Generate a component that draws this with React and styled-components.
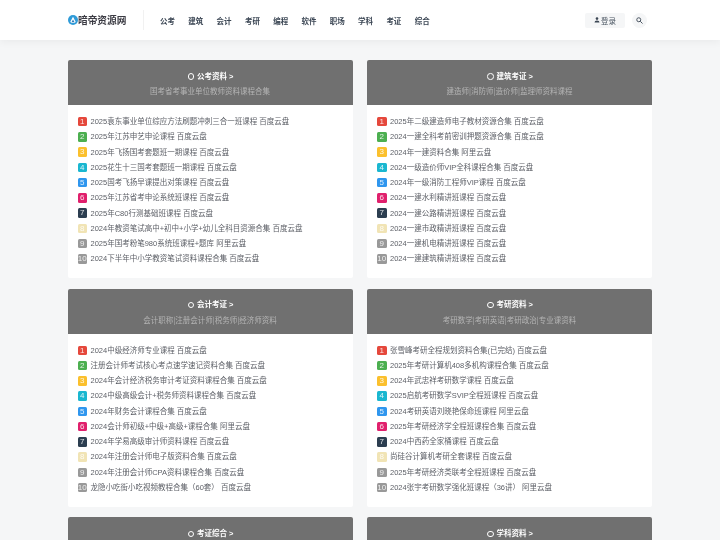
import React from "react";
import styled, { createGlobalStyle } from "styled-components";

const Global = createGlobalStyle`
  html, body { margin: 0; padding: 0; height: 540px; overflow: hidden; background: #f5f6f7; }
  body { font-family: "Liberation Sans", "Noto Sans CJK SC", sans-serif; }
`;

const Page = styled.div`
  filter: blur(0.35px);
`;
const Header = styled.header`
  height: 40px;
  background: #fff;
  box-shadow: 0 2px 8px rgba(0, 0, 0, 0.05);
  display: flex;
  align-items: center;
  padding: 0 73px 0 67.5px;
  position: relative;
`;
const Logo = styled.div`
  display: flex;
  align-items: center;
  gap: 0.5px;
  width: 75.5px;
  height: 20px;
  border-right: 1px solid #f1f1f1;
  font: 700 9.7px "Noto Sans CJK SC", serif;
  color: #3c3c44;
`;
const Nav = styled.nav`
  display: flex;
  gap: 13.3px;
  margin-left: 16px;
  flex: 1;
`;
const NavItem = styled.a`
  font: 700 7.5px "Noto Sans CJK SC", sans-serif;
  color: #3b4654;
`;
const Login = styled.button`
  width: 40px;
  height: 15px;
  margin-right: -1px;
  border: 0;
  padding: 0;
  border-radius: 2px;
  background: #f5f6f7;
  color: #4a5561;
  font: 400 7.5px "Noto Sans CJK SC", sans-serif;
  display: flex;
  align-items: center;
  justify-content: center;
  gap: 1px;
`;
const SearchBtn = styled.button`
  width: 15px;
  height: 15px;
  margin-left: 8px;
  border: 0;
  padding: 0;
  border-radius: 50%;
  background: #f5f6f7;
  display: flex;
  align-items: center;
  justify-content: center;
`;
const Main = styled.main`
  width: 585px;
  margin: 20px 0 0 67.5px;
  display: grid;
  grid-template-columns: 285px 285px;
  column-gap: 14.5px;
  row-gap: 10.5px;
`;
const Card = styled.section`
  background: #fff;
  border-radius: 2px;
`;
const CardHead = styled.div`
  height: 45px;
  box-sizing: border-box;
  padding-top: 10.5px;
  background: #707070;
  border-radius: 2px 2px 0 0;
  text-align: center;
`;
const CardTitle = styled.div`
  display: flex;
  align-items: center;
  justify-content: center;
  gap: 3px;
  height: 12px;
  padding-left: 1px;
  font: 700 7.5px/12px "Liberation Sans", "Noto Sans CJK SC", sans-serif;
  color: #fff;
`;
const Ring = styled.i`
  width: 6.5px;
  height: 6.5px;
  box-sizing: border-box;
  border: 1px solid #fff;
  border-radius: 50%;
`;
const CardSub = styled.div`
  margin-top: 2.5px;
  font: 400 7.5px/12px "Noto Sans CJK SC", sans-serif;
  color: #b4b4b4;
`;
const List = styled.ol`
  list-style: none;
  margin: 0;
  padding: 9px 10px 11.7px;
`;
const Row = styled.li`
  height: 15.25px;
  display: flex;
  align-items: center;
  gap: 3.5px;
  font: 400 7.5px/15.25px "Liberation Sans", "Noto Sans CJK SC", sans-serif;
  color: #5c5f66;
  white-space: nowrap;
`;
const Rank = styled.span`
  flex: none;
  width: 9.5px;
  height: 9.5px;
  border-radius: 1.5px;
  background: ${(p) => p.$color};
  color: rgba(255, 255, 255, 0.85);
  font: 400 8px/9.5px "Liberation Sans", sans-serif;
  text-align: center;
`;

const rankColors = ["#e5483c", "#4caf50", "#fbc02d", "#1ab7d0", "#2f96ee", "#e0206c", "#2c3e50", "#f1e4b5", "#999", "#999"];

const cards = [
  { title: "公考资料 >", sub: "国考省考事业单位教师资料课程合集", items: [
    "2025袁东事业单位综应方法刷题冲刺三合一班课程 百度云盘", "2025年江苏申艺申论课程 百度云盘", "2025年飞扬国考套题班一期课程 百度云盘", "2025花生十三国考套题班一期课程 百度云盘", "2025国考飞扬早课提出对策课程 百度云盘", "2025年江苏省考申论系统班课程 百度云盘", "2025年C80行测基础班课程 百度云盘", "2024年教资笔试高中+初中+小学+幼儿全科目资源合集 百度云盘", "2025年国考粉笔980系统班课程+题库 阿里云盘", "2024下半年中小学教资笔试资料课程合集 百度云盘" ] },
  { title: "建筑考证 >", sub: "建造师|消防师|造价师|监理师资料课程", items: [
    "2025年二级建造师电子教材资源合集 百度云盘", "2024一建全科考前密训押题资源合集 百度云盘", "2024年一建资料合集 阿里云盘", "2024一级造价师VIP全科课程合集 百度云盘", "2024年一级消防工程师VIP课程 百度云盘", "2024一建水利精讲班课程 百度云盘", "2024一建公路精讲班课程 百度云盘", "2024一建市政精讲班课程 百度云盘", "2024一建机电精讲班课程 百度云盘", "2024一建建筑精讲班课程 百度云盘" ] },
  { title: "会计考证 >", sub: "会计职称|注册会计师|税务师|经济师资料", items: [
    "2024中级经济师专业课程 百度云盘", "注册会计师考试核心考点速学速记资料合集 百度云盘", "2024年会计经济税务审计考证资料课程合集 百度云盘", "2024中级高级会计+税务师资料课程合集 百度云盘", "2024年财务会计课程合集 百度云盘", "2024会计师初级+中级+高级+课程合集 阿里云盘", "2024年学易高级审计师资料课程 百度云盘", "2024年注册会计师电子版资料合集 百度云盘", "2024年注册会计师CPA资料课程合集 百度云盘", "龙隐小吃街小吃视频教程合集（60套） 百度云盘" ] },
  { title: "考研资料 >", sub: "考研数学|考研英语|考研政治|专业课资料", items: [
    "张雪峰考研全程规划资料合集(已完结) 百度云盘", "2025年考研计算机408多机构课程合集 百度云盘", "2024年武忠祥考研数学课程 百度云盘", "2025启航考研数学SVIP全程班课程 百度云盘", "2024考研英语刘晓艳保命班课程 阿里云盘", "2025年考研经济学全程班课程合集 百度云盘", "2024中西药全家桶课程 百度云盘", "尚硅谷计算机考研全套课程 百度云盘", "2025年考研经济类联考全程班课程 百度云盘", "2024张宇考研数学强化班课程（36讲） 阿里云盘" ] },
  { title: "考证综合 >", sub: "", items: [] },
  { title: "学科资料 >", sub: "", items: [] },
];

const nav = ["公考", "建筑", "会计", "考研", "编程", "软件", "职场", "学科", "考证", "综合"];

export default function App() {
  return (
    <Page>
      <Global />
      <Header>
        <Logo>
          <svg width="10" height="10" viewBox="0 0 18 18">
            <circle cx="9" cy="9" r="9" fill="#2f9bd8" />
            <path d="M9 3 L14 12.5 Q9 16 4 12.5 Z" fill="#fff" />
            <path d="M9 8 L11.5 12.5 Q9 14 6.5 12.5 Z" fill="#2f78b8" />
          </svg>
          暗帝资源网
        </Logo>
        <Nav>{nav.map((n) => <NavItem key={n}>{n}</NavItem>)}</Nav>
        <Login>
          <svg width="6" height="6" viewBox="0 0 12 12">
            <circle cx="6" cy="3.2" r="2.6" fill="#3b4654" />
            <path d="M1 11 Q1 7 6 7 Q11 7 11 11 Z" fill="#3b4654" />
          </svg>
          登录
        </Login>
        <SearchBtn>
          <svg width="7" height="7" viewBox="0 0 14 14" fill="none" stroke="#4a5561" strokeWidth="2">
            <circle cx="5.5" cy="5.5" r="4" />
            <path d="M8.5 8.5 L13 13" />
          </svg>
        </SearchBtn>
      </Header>
      <Main>
        {cards.map((c) => (
          <Card key={c.title}>
            <CardHead>
              <CardTitle><Ring />{c.title}</CardTitle>
              <CardSub>{c.sub}</CardSub>
            </CardHead>
            <List>
              {c.items.map((t, i) => (
                <Row key={t}><Rank $color={rankColors[i]}>{i + 1}</Rank>{t}</Row>
              ))}
            </List>
          </Card>
        ))}
      </Main>
    </Page>
  );
}
